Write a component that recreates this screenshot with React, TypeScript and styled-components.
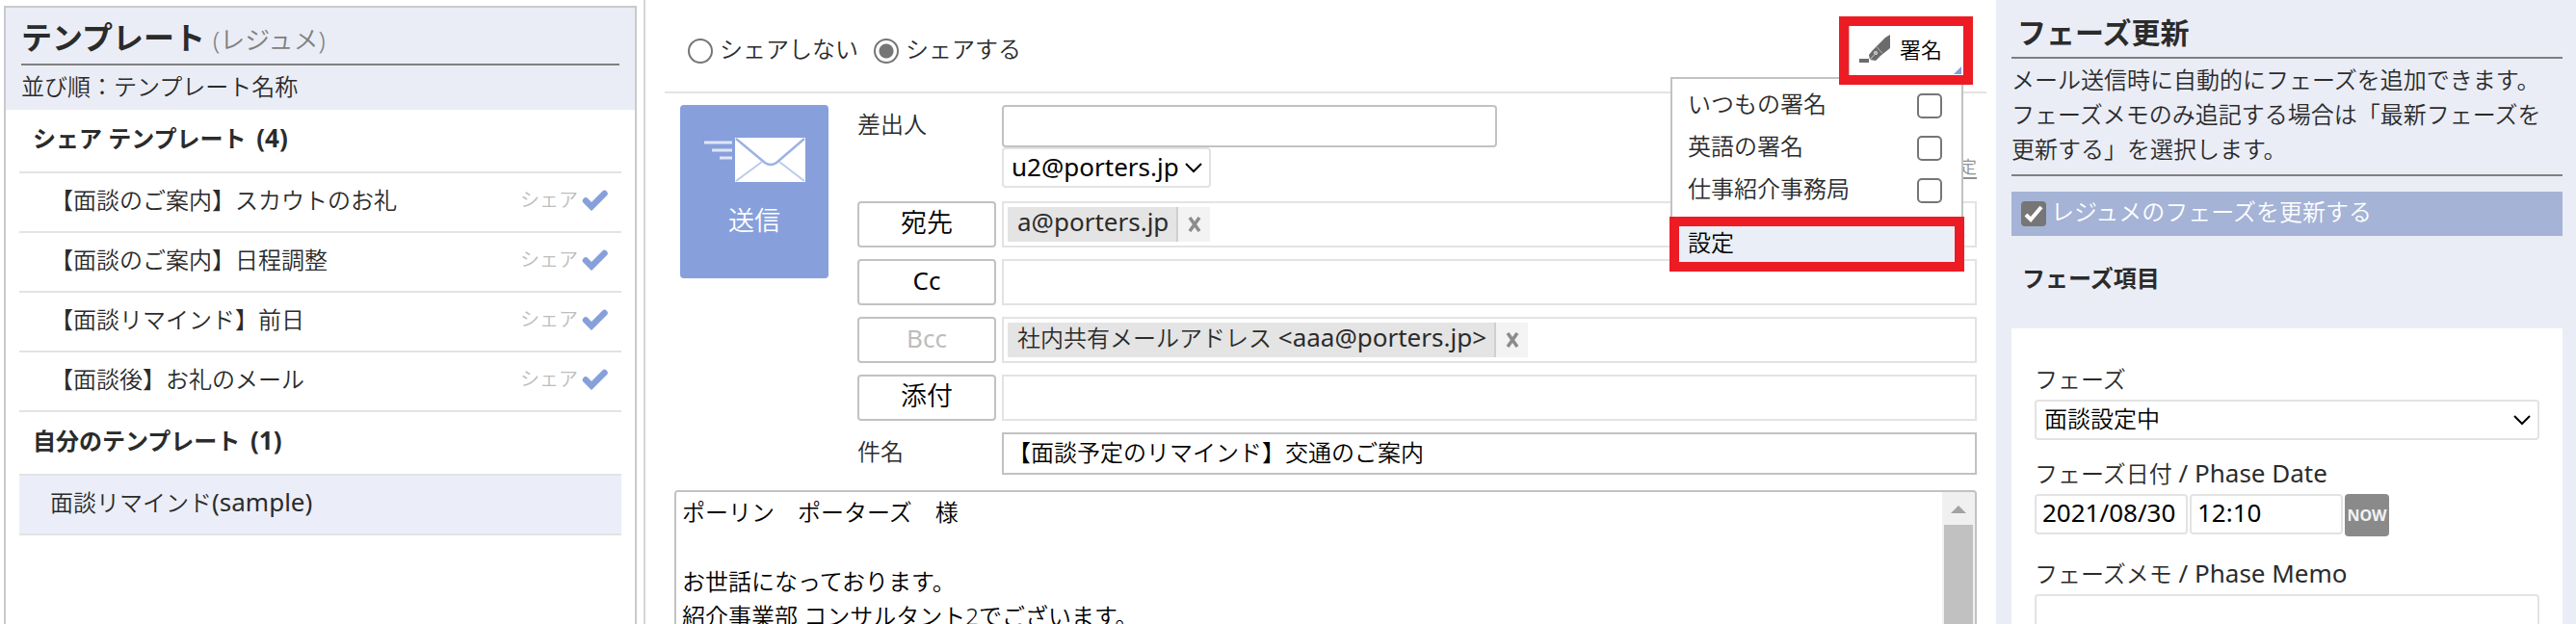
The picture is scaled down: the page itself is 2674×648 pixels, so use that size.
import React from "react";
import styled, { createGlobalStyle, css } from "styled-components";

const color = {
  text: "#2b2b2b",
  muted: "#808080",
  faint: "#bdbdbd",
  blue: "#87a0dc",
  pane: "#eaedf6",
  line: "#e3e3e3",
  border: "#c2c2c2",
  red: "#ed1c24",
};

const GlobalStyle = createGlobalStyle`
  *, *::before, *::after { box-sizing: border-box; }
  body {
    margin: 0;
    background: #fff;
    color: ${color.text};
    font-family: "Noto Sans", "Noto Sans CJK JP", sans-serif;
    font-size: 24px;
    font-weight: 350;
    line-height: 36px;
  }
  button, input, select, textarea { font: inherit; margin: 0; }
  h1, h2, h3, p, ul { margin: 0; padding: 0; }
  ul { list-style: none; }
`;

const Shell = styled.div`
  display: grid;
  grid-template-columns: 670px minmax(0, 1fr) 602px;
  height: 100vh;
  overflow: hidden;
`;

const Latin = styled.span`
  font-size: 26px;
  font-weight: 400;
  line-height: 1;
`;

/* ---------- template list ---------- */

const TemplatePane = styled.aside`
  display: flex;
  padding: 6px 7px 0 4px;
  border-right: 2px solid #d6d6d6;
  overflow: hidden;
`;

const TemplateCard = styled.div`
  flex: 1;
  border: 2px solid #cacaca;
  border-bottom: 0;
`;

const TemplateHeader = styled.header`
  padding: 12px 16px 4px;
  background: ${color.pane};
`;

const TemplateTitle = styled.h1`
  height: 48px;
  border-bottom: 2px solid ${color.muted};
  font-size: 32px;
  line-height: 38px;
  font-weight: 700;
`;

const TitleNote = styled.span`
  margin-left: 8px;
  color: ${color.muted};
  font-size: 26px;
  font-weight: 350;
  line-height: 1;
`;

const SortOrder = styled.p`
  padding: 4px 0 2px;
`;

const TemplateLists = styled.div`
  padding: 0 14px;
`;

const GroupTitle = styled.h2`
  height: 66px;
  padding: 12px 14px 0;
  border-bottom: 2px solid ${color.line};
  font-size: 24px;
  line-height: 36px;
  font-weight: 700;
`;

const GroupCount = styled.span`
  margin-left: 4px;
  font-size: 26px;
  line-height: 1;
`;

const TemplateItem = styled.li<{ $selected?: boolean }>`
  display: flex;
  align-items: center;
  justify-content: space-between;
  height: 62px;
  padding: 0 14px 4px 32px;
  border-bottom: 2px solid ${color.line};
  background: ${(p) => (p.$selected ? "#ebeef8" : "transparent")};
`;

const Shared = styled.span`
  display: flex;
  align-items: center;
  gap: 4px;
  color: ${color.faint};
  font-size: 20px;
`;

/* ---------- composer ---------- */

const Composer = styled.main`
  display: flex;
  flex-direction: column;
  min-width: 0;
  padding: 0 10px 0 20px;
`;

const Toolbar = styled.div`
  display: flex;
  align-items: center;
  justify-content: space-between;
  padding: 27px 24px 17px;
  border-bottom: 2px solid ${color.line};
`;

const RadioGroup = styled.div`
  display: flex;
  gap: 16px;
`;

const ChoiceLabel = styled.label`
  display: flex;
  align-items: center;
  gap: 7px;
`;

const ChoiceText = styled.span`
  padding-bottom: 4px;
`;

const Radio = styled.input`
  appearance: none;
  width: 26px;
  height: 26px;
  border: 2px solid #767676;
  border-radius: 50%;
  background: #fff;
  &:checked {
    background: radial-gradient(circle, #767676 0 7px, #fff 8px);
  }
`;

const SignatureArea = styled.div`
  position: relative;
`;

const highlight = css`
  outline: 10px solid ${color.red};
`;

const SignatureButton = styled.button`
  ${highlight}
  position: relative;
  z-index: 2;
  display: flex;
  align-items: center;
  gap: 9px;
  width: 119px;
  height: 51px;
  padding: 0 10px 4px;
  border: 0;
  border-left: 1px solid ${color.border};
  background: #fff;
  color: #000;
  font-size: 22px;
`;

const Corner = styled.svg`
  position: absolute;
  right: 2px;
  bottom: 1px;
`;

const SignatureMenu = styled.div`
  position: absolute;
  z-index: 1;
  top: 53px;
  right: 0;
  width: 304px;
  padding: 6px 7px 7px;
  border: 2px solid ${color.border};
  background: #fff;
`;

const MenuChoice = styled.label`
  display: flex;
  align-items: center;
  justify-content: space-between;
  height: 44px;
  padding: 0 13px 0 9px;
`;

const MenuBox = styled.input`
  appearance: none;
  width: 26px;
  height: 26px;
  border: 2px solid #767676;
  border-radius: 5px;
  background: #fff;
`;

const MenuAction = styled.button`
  ${highlight}
  display: block;
  width: 100%;
  height: 37px;
  margin-top: 15px;
  padding: 0 9px 4px;
  border: 0;
  background: #eaeff7;
  color: #000;
  text-align: left;
  line-height: 32px;
`;

const MailForm = styled.div`
  display: flex;
  align-items: flex-start;
  gap: 30px;
  padding: 12px 10px 16px 16px;
`;

const SendButton = styled.button`
  display: flex;
  flex-direction: column;
  align-items: center;
  gap: 22px;
  width: 154px;
  height: 180px;
  padding: 34px 0 0;
  border: 0;
  border-radius: 4px;
  background: ${color.blue};
  color: #fff;
  font-size: 27px;
`;

const Fields = styled.div`
  flex: 1;
  min-width: 0;
  display: grid;
  grid-template-columns: 144px minmax(0, 1fr);
  gap: 12px 6px;
`;

const FieldLabel = styled.label`
  align-self: start;
  padding-top: 2px;
`;

const FromCell = styled.div`
  display: flex;
  align-items: flex-end;
  justify-content: space-between;
  padding-bottom: 2px;
`;

const FromInputs = styled.div`
  display: flex;
  flex-direction: column;
  align-items: flex-start;
  width: 514px;
`;

const TextInput = styled.input<{ $square?: boolean }>`
  width: 100%;
  height: 44px;
  padding: 0 4px 6px;
  border: 2px solid ${color.border};
  border-radius: ${(p) => (p.$square ? 0 : 4)}px;
  background: #fff;
  color: #000;
`;

const SelectWrap = styled.div<{ $width: string }>`
  position: relative;
  width: ${(p) => p.$width};
`;

const Select = styled.select<{ $latin?: boolean }>`
  appearance: none;
  display: block;
  width: 100%;
  height: 42px;
  padding: 0 32px 2px 8px;
  border: 2px solid ${color.line};
  border-radius: 4px;
  background: #fff;
  color: #000;
  ${(p) => p.$latin && "font-size: 26px; font-weight: 400;"}
`;

const Chevron = styled.svg`
  position: absolute;
  right: 9px;
  top: 15px;
  pointer-events: none;
`;

const SettingLink = styled.a`
  margin-bottom: 9px;
  border-bottom: 2px solid #909090;
  color: #909090;
  font-size: 18px;
  line-height: 22px;
  text-decoration: none;
`;

const FieldButton = styled.button`
  height: 48px;
  padding: 0 0 4px;
  border: 2px solid ${color.border};
  border-radius: 4px;
  background: #fff;
  color: #000;
  font-size: 27px;
  &:disabled {
    color: ${color.faint};
  }
`;

const Recipients = styled.div`
  height: 48px;
  padding: 4px;
  border: 2px solid ${color.line};
`;

const Chip = styled.span`
  display: flex;
  width: fit-content;
  height: 36px;
  background: #e4e4e4;
  line-height: 32px;
  white-space: pre;
`;

const ChipText = styled.span`
  padding: 0 8px 0 10px;
`;

const ChipRemove = styled.button`
  display: flex;
  align-items: center;
  justify-content: center;
  width: 35px;
  padding: 0;
  border: 0;
  border-left: 2px solid #cfcfcf;
  background: #f3f3f3;
`;

const BodyBox = styled.div`
  flex: 1;
  display: flex;
  margin: 0 10px;
  border: 2px solid ${color.border};
  border-bottom: 0;
  border-radius: 4px 4px 0 0;
  overflow: hidden;
`;

const BodyText = styled.textarea`
  flex: 1;
  padding: 3px 6px;
  border: 0;
  outline: 0;
  resize: none;
  overflow: hidden;
  background: #fff;
  color: #000;
  line-height: 36px;
`;

const ScrollTrack = styled.div`
  display: flex;
  flex-direction: column;
  width: 34px;
  padding: 0 2px;
  background: #f0f0f0;
`;

const ScrollUp = styled.svg`
  flex: none;
  margin: 14px auto 12px;
`;

const ScrollThumb = styled.div`
  flex: 1;
  background: #c1c1c1;
`;

/* ---------- phase pane ---------- */

const PhasePane = styled.aside`
  display: flex;
  flex-direction: column;
  padding: 14px 14px 0 16px;
  background: ${color.pane};
`;

const PhaseTitle = styled.h2`
  padding: 0 6px 5px;
  font-size: 30px;
  line-height: 40px;
  font-weight: 700;
`;

const PhaseNote = styled.p`
  padding: 4px 0 8px;
  border: solid ${color.muted};
  border-width: 2px 0;
`;

const UpdateToggle = styled.label`
  display: flex;
  align-items: center;
  gap: 5px;
  height: 46px;
  margin-top: 16px;
  padding: 0 10px;
  background: #a5b3d6;
  color: #fff;
`;

const ToggleBox = styled.span`
  position: relative;
  display: flex;
`;

const ToggleInput = styled.input`
  appearance: none;
  width: 26px;
  height: 26px;
  border-radius: 4px;
  background: #767676;
`;

const ToggleMark = styled.svg`
  position: absolute;
  inset: 0;
  pointer-events: none;
`;

const PhaseSubtitle = styled.h3`
  padding: 26px 11px 34px;
  font-size: 24px;
  line-height: 36px;
  font-weight: 700;
`;

const PhaseCard = styled.div`
  flex: 1;
  padding: 35px 24px 0;
  background: #fff;
`;

const PhaseField = styled.div`
  margin-bottom: 17px;
`;

const PhaseLabel = styled.label`
  display: block;
  height: 39px;
`;

const DateRow = styled.div`
  display: flex;
  align-items: flex-start;
  gap: 2px;
  min-height: 48px;
`;

const DateInput = styled.input`
  width: 159px;
  height: 42px;
  padding: 0 6px 4px;
  border: 2px solid ${color.line};
  border-radius: 4px;
  background: #fff;
  color: #000;
  font-size: 26px;
  font-weight: 400;
`;

const NowButton = styled.button`
  width: 46px;
  height: 44px;
  padding: 0;
  border: 0;
  border-radius: 4px;
  background: #8a8a8a;
  color: #f2f2f2;
  font-size: 16px;
  font-weight: 700;
`;

const MemoInput = styled.textarea`
  display: block;
  width: 100%;
  height: 160px;
  border: 2px solid ${color.line};
  border-radius: 4px;
  background: #fff;
  resize: none;
`;

/* ---------- drawings ---------- */

const CheckIcon = () => (
  <svg width="27" height="22" viewBox="0 0 27 22" aria-hidden="true">
    <path d="M4 11.500l6 6L23.500 4" fill="none" stroke={color.blue} strokeWidth="6.500" strokeLinejoin="miter" strokeLinecap="round" />
  </svg>
);

const MailIcon = () => (
  <svg width="105" height="46" viewBox="0 0 105 46" aria-hidden="true">
    <path d="M0 5h29M8 13h21M16 21h13" stroke="#dfe6f7" strokeWidth="3" />
    <rect x="32" width="73" height="46" fill="#fff" />
    <path d="M33 1l30 25q6 4 12 0L104 1" fill="none" stroke="#9db2e4" strokeWidth="2.5" />
    <path d="M33 45l27-20M104 45L78 25" stroke="#bccaee" strokeWidth="2" />
  </svg>
);

const PenIcon = () => (
  <svg width="33" height="30" viewBox="0 0 33 30" aria-hidden="true">
    <path d="M0 25h10v4H0z" fill="#6b6b6b" />
    <path d="M32 0v14L22 22l-5 5-6-1-1-5 4-5L27 3z" fill="#6b6b6b" />
    <path d="M18 12.500l6 7" stroke="#b5b5b5" strokeWidth="1" />
    <circle cx="17" cy="19" r="2" fill="#e0e0e0" />
    <circle cx="17" cy="19" r="0.800" fill="#6b6b6b" />
    <path d="M11 26l4.500-5" stroke="#d0d0d0" strokeWidth="1" />
  </svg>
);

const RemoveIcon = () => (
  <svg width="14" height="16" viewBox="0 0 14 16" aria-hidden="true">
    <path d="M2 1l10 14M12 1L2 15" stroke="#8c8c8c" strokeWidth="3.500" />
  </svg>
);

const ChevronIcon = () => (
  <Chevron width="18" height="12" viewBox="0 0 18 12" aria-hidden="true">
    <path d="M1 2l8 8 8-8" fill="none" stroke="#000" strokeWidth="2" />
  </Chevron>
);

/* ---------- page ---------- */

const sharedTemplates = [
  "【面談のご案内】スカウトのお礼",
  "【面談のご案内】日程調整",
  "【面談リマインド】前日",
  "【面談後】お礼のメール",
];

const signatures = ["いつもの署名", "英語の署名", "仕事紹介事務局"];

const message = `ポーリン　ポーターズ　様

お世話になっております。
紹介事業部 コンサルタント2でございます。`;

const RecipientChip = ({ name, address }: { name?: string; address: string }) => (
  <Chip>
    <ChipText>
      {name}
      <Latin>{address}</Latin>
    </ChipText>
    <ChipRemove type="button" aria-label="削除">
      <RemoveIcon />
    </ChipRemove>
  </Chip>
);

export default function App() {
  return (
    <>
      <GlobalStyle />
      <Shell>
        <TemplatePane>
          <TemplateCard>
            <TemplateHeader>
              <TemplateTitle>
                テンプレート<TitleNote>(レジュメ)</TitleNote>
              </TemplateTitle>
              <SortOrder>並び順：テンプレート名称</SortOrder>
            </TemplateHeader>
            <TemplateLists>
              <GroupTitle>
                シェア テンプレート<GroupCount> (4)</GroupCount>
              </GroupTitle>
              <ul>
                {sharedTemplates.map((name) => (
                  <TemplateItem key={name}>
                    {name}
                    <Shared>
                      シェア
                      <CheckIcon />
                    </Shared>
                  </TemplateItem>
                ))}
              </ul>
              <GroupTitle>
                自分のテンプレート<GroupCount> (1)</GroupCount>
              </GroupTitle>
              <ul>
                <TemplateItem $selected>
                  <span>
                    面談リマインド<Latin>(sample)</Latin>
                  </span>
                </TemplateItem>
              </ul>
            </TemplateLists>
          </TemplateCard>
        </TemplatePane>

        <Composer>
          <Toolbar>
            <RadioGroup>
              <ChoiceLabel>
                <Radio type="radio" name="share" />
                <ChoiceText>シェアしない</ChoiceText>
              </ChoiceLabel>
              <ChoiceLabel>
                <Radio type="radio" name="share" defaultChecked />
                <ChoiceText>シェアする</ChoiceText>
              </ChoiceLabel>
            </RadioGroup>
            <SignatureArea>
              <SignatureButton type="button">
                <PenIcon />
                署名
                <Corner width="8" height="8" viewBox="0 0 8 8" aria-hidden="true">
                  <path d="M8 0v8H0z" fill={color.blue} />
                </Corner>
              </SignatureButton>
              <SignatureMenu>
                {signatures.map((name) => (
                  <MenuChoice key={name}>
                    <ChoiceText>{name}</ChoiceText>
                    <MenuBox type="checkbox" />
                  </MenuChoice>
                ))}
                <MenuAction type="button">設定</MenuAction>
              </SignatureMenu>
            </SignatureArea>
          </Toolbar>

          <MailForm>
            <SendButton type="button">
              <MailIcon />
              送信
            </SendButton>
            <Fields>
              <FieldLabel htmlFor="from">差出人</FieldLabel>
              <FromCell>
                <FromInputs>
                  <TextInput id="from" type="text" />
                  <SelectWrap $width="217px">
                    <Select $latin aria-label="差出人アドレス">
                      <option>u2@porters.jp</option>
                    </Select>
                    <ChevronIcon />
                  </SelectWrap>
                </FromInputs>
                <SettingLink href="#">設定</SettingLink>
              </FromCell>

              <FieldButton type="button">宛先</FieldButton>
              <Recipients>
                <RecipientChip address="a@porters.jp" />
              </Recipients>

              <FieldButton type="button">
                <Latin>Cc</Latin>
              </FieldButton>
              <Recipients />

              <FieldButton type="button" disabled>
                <Latin>Bcc</Latin>
              </FieldButton>
              <Recipients>
                <RecipientChip name="社内共有メールアドレス" address=" <aaa@porters.jp>" />
              </Recipients>

              <FieldButton type="button">添付</FieldButton>
              <Recipients />

              <FieldLabel htmlFor="subject">件名</FieldLabel>
              <TextInput id="subject" type="text" $square defaultValue="【面談予定のリマインド】交通のご案内" />
            </Fields>
          </MailForm>

          <BodyBox>
            <BodyText aria-label="本文" defaultValue={message} />
            <ScrollTrack aria-hidden="true">
              <ScrollUp width="16" height="8" viewBox="0 0 16 8">
                <path d="M8 0l8 8H0z" fill="#a3a3a3" />
              </ScrollUp>
              <ScrollThumb />
            </ScrollTrack>
          </BodyBox>
        </Composer>

        <PhasePane>
          <PhaseTitle>フェーズ更新</PhaseTitle>
          <PhaseNote>
            メール送信時に自動的にフェーズを追加できます。フェーズメモのみ追記する場合は「最新フェーズを更新する」を選択します。
          </PhaseNote>
          <UpdateToggle>
            <ToggleBox>
              <ToggleInput type="checkbox" defaultChecked />
              <ToggleMark width="26" height="26" viewBox="0 0 26 26" aria-hidden="true">
                <path d="M5 14l5 5L21 6" fill="none" stroke="#fff" strokeWidth="4" />
              </ToggleMark>
            </ToggleBox>
            <ChoiceText>レジュメのフェーズを更新する</ChoiceText>
          </UpdateToggle>
          <PhaseSubtitle>フェーズ項目</PhaseSubtitle>
          <PhaseCard>
            <PhaseField>
              <PhaseLabel htmlFor="phase">フェーズ</PhaseLabel>
              <SelectWrap $width="100%">
                <Select id="phase">
                  <option>面談設定中</option>
                </Select>
                <ChevronIcon />
              </SelectWrap>
            </PhaseField>
            <PhaseField>
              <PhaseLabel htmlFor="phase-date">
                フェーズ日付<Latin> / Phase Date</Latin>
              </PhaseLabel>
              <DateRow>
                <DateInput id="phase-date" type="text" defaultValue="2021/08/30" />
                <DateInput type="text" aria-label="時刻" defaultValue="12:10" />
                <NowButton type="button">NOW</NowButton>
              </DateRow>
            </PhaseField>
            <PhaseField>
              <PhaseLabel htmlFor="phase-memo">
                フェーズメモ<Latin> / Phase Memo</Latin>
              </PhaseLabel>
              <MemoInput id="phase-memo" />
            </PhaseField>
          </PhaseCard>
        </PhasePane>
      </Shell>
    </>
  );
}
